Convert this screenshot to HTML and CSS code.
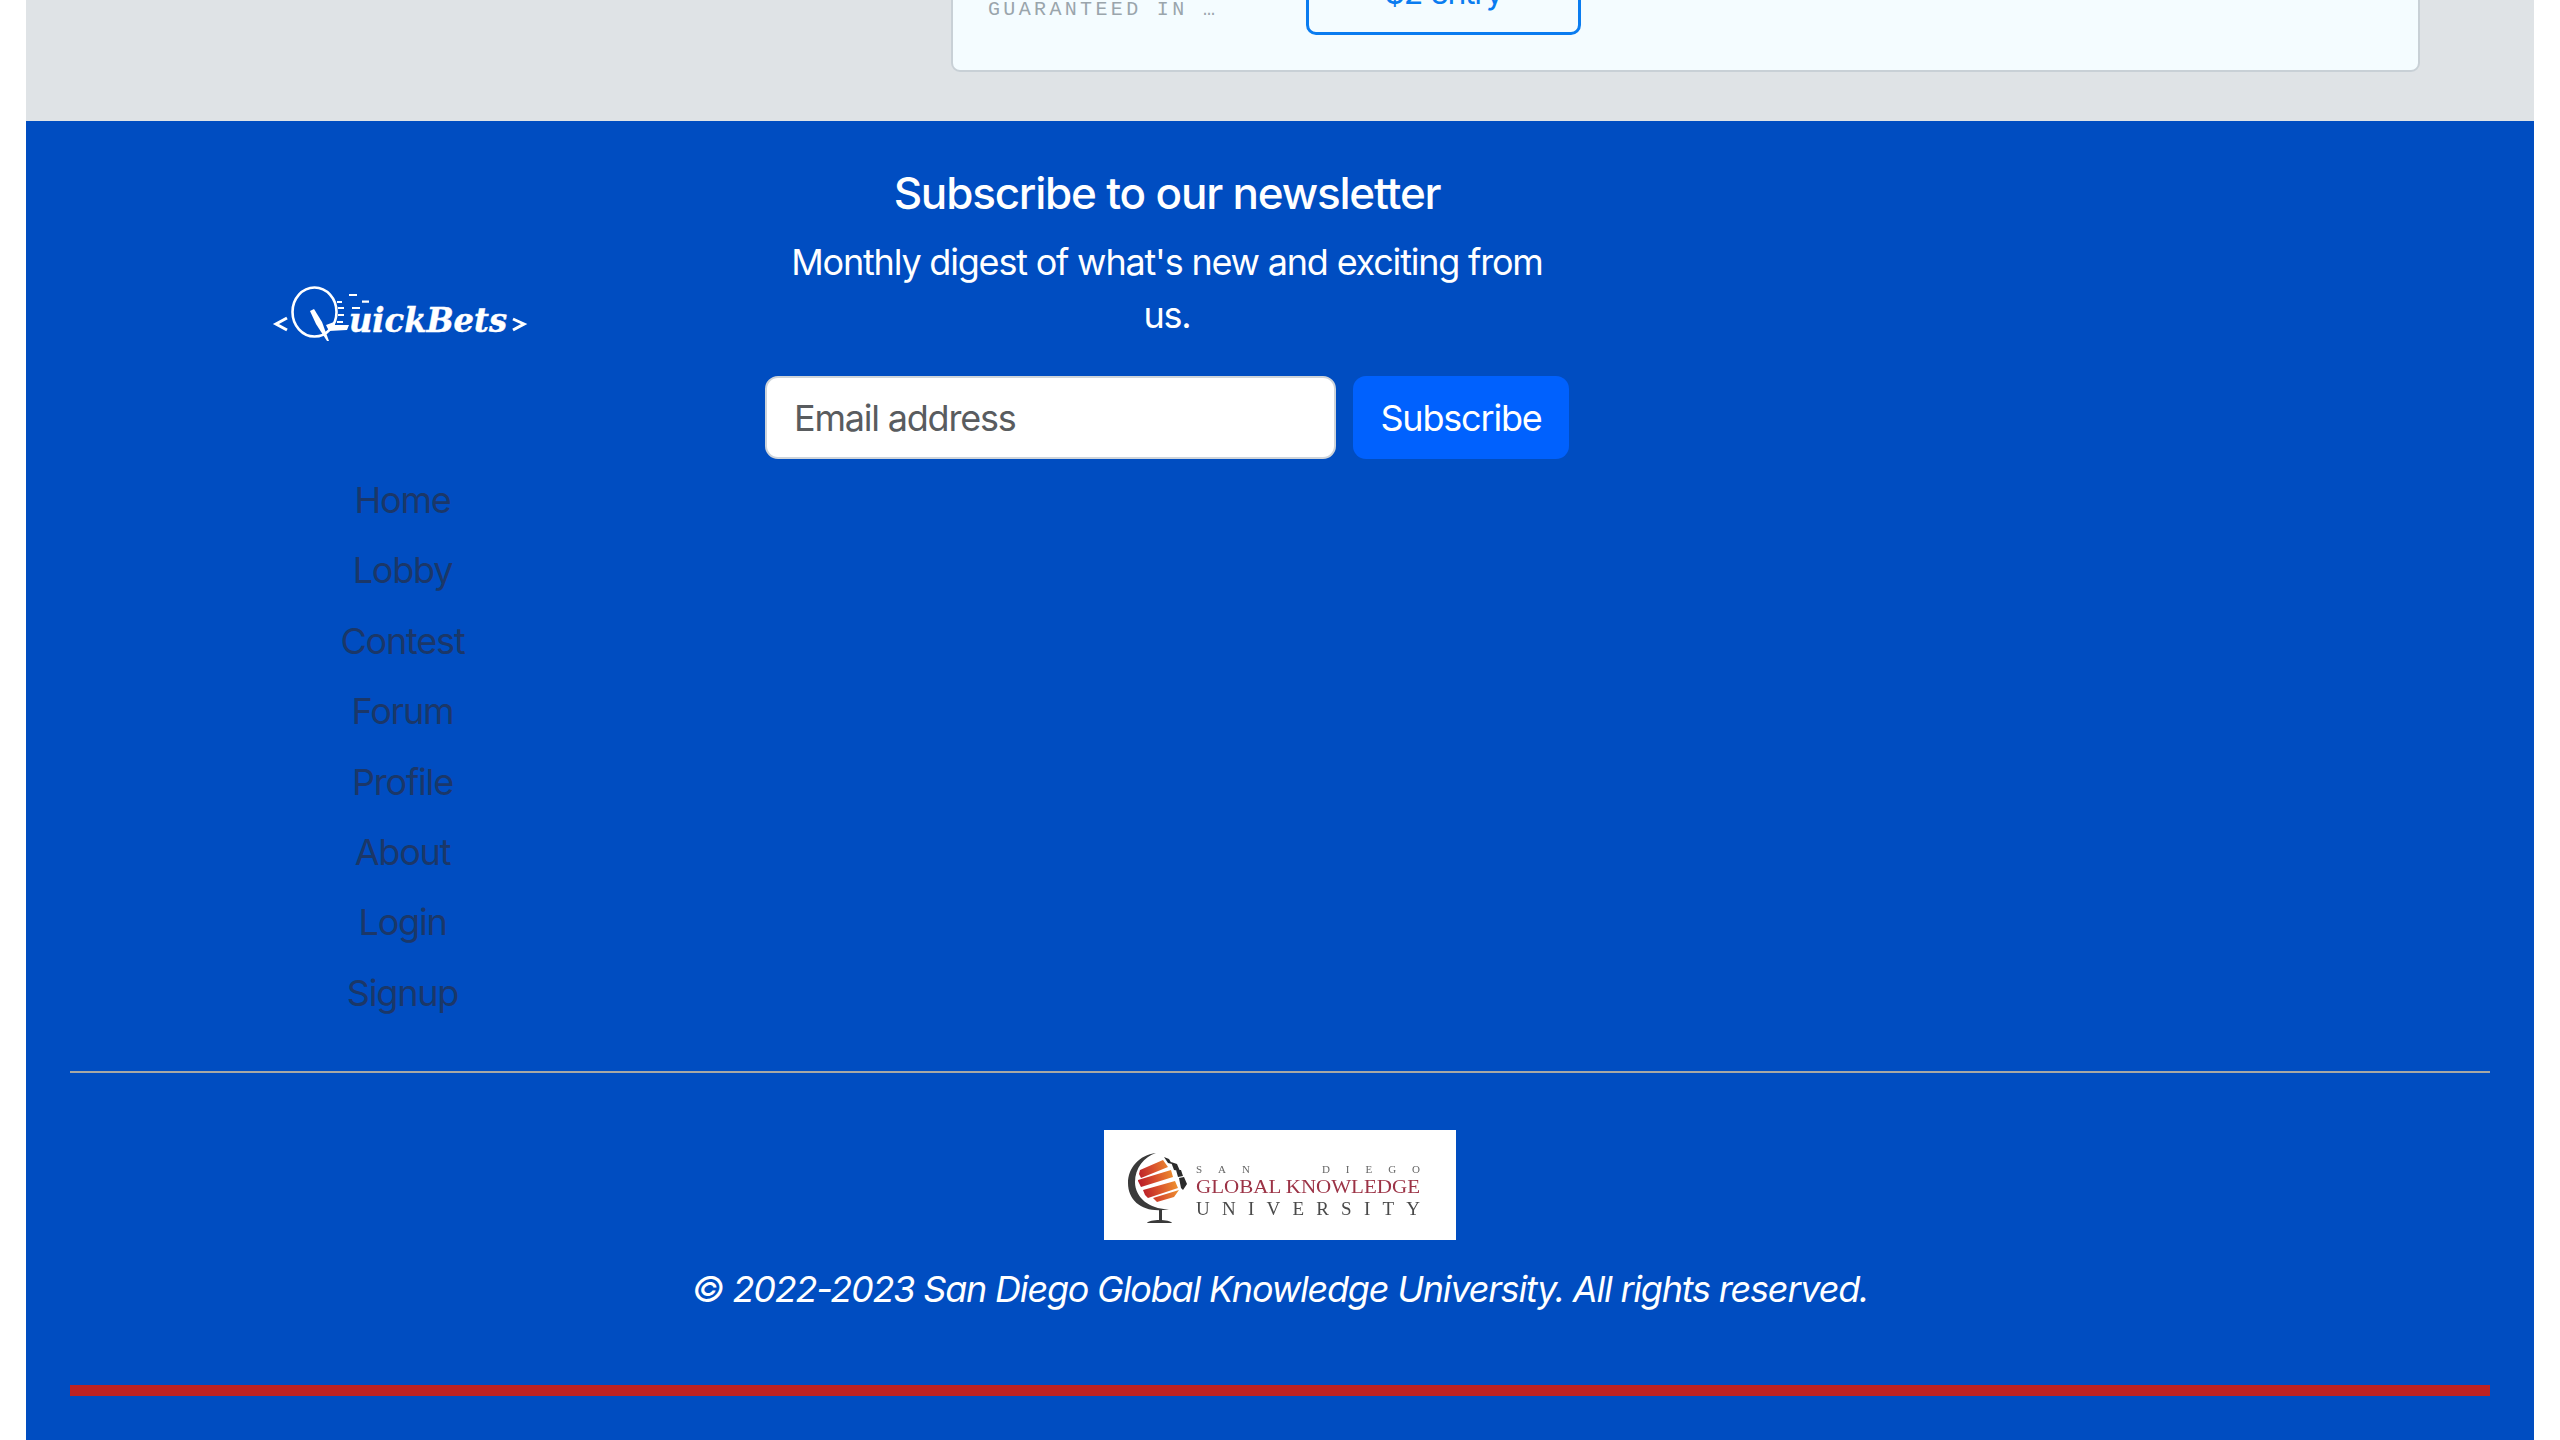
FILE: index.html
```html
<!DOCTYPE html>
<html lang="en">
<head>
<meta charset="utf-8">
<title>QuickBets</title>
<link rel="stylesheet" href="styles.css">
</head>
<body>
<div class="page">
  <section class="hero">
    <div class="card">
      <span class="card-note">GUARANTEED IN …</span>
      <a class="entry" href="#">$2 entry</a>
    </div>
  </section>
  <footer class="footer">
    <div class="columns">
      <div class="nav-col">
        <svg class="brand" viewBox="2 0 300 100" width="300" height="100" role="img" aria-label="QuickBets">
          <g fill="none" stroke="#fff">
            <ellipse cx="64.5" cy="52" rx="22" ry="24.5" stroke-width="2.6"/>
            <path d="M37 58L26 64l11 6M263 59l11 5-11 6" stroke-width="3"/>
            <path d="M99 35h8M112 41.7h7M102 48h8M87 42h5M88 48h6M88 55h6M87 62h6" stroke-width="2.2"/>
          </g>
          <path d="M60 51l4-2 8 13 7 19h-2L66 64z" fill="#fff"/>
          <path d="M76 65l8-3 1 3 14 0-2 5-18 1z" fill="#fff"/>
          <text class="brand-text" x="99" y="72" textLength="158" lengthAdjust="spacingAndGlyphs">uickBets</text>
        </svg>
        <nav class="nav">
          <a href="#">Home</a>
          <a href="#">Lobby</a>
          <a href="#">Contest</a>
          <a href="#">Forum</a>
          <a href="#">Profile</a>
          <a href="#">About</a>
          <a href="#">Login</a>
          <a href="#">Signup</a>
        </nav>
      </div>
      <form class="news">
        <h5 class="news-title">Subscribe to our newsletter</h5>
        <p class="news-text">Monthly digest of what's new and exciting from us.</p>
        <div class="news-row">
          <input class="news-input" type="text" placeholder="Email address">
          <button class="news-btn" type="button">Subscribe</button>
        </div>
      </form>
    </div>
    <hr class="rule">
    <div class="uni">
      <svg class="uni-logo" viewBox="0 0 352 110" width="352" height="110" role="img" aria-label="San Diego Global Knowledge University">
        <defs>
          <linearGradient id="stripe" gradientUnits="userSpaceOnUse" x1="34" x2="72" y1="50" y2="40">
            <stop offset="0" stop-color="#b81c2a"/>
            <stop offset="0.45" stop-color="#d9502c"/>
            <stop offset="1" stop-color="#f0982f"/>
          </linearGradient>
        </defs>
        <rect width="352" height="110" fill="#fff"/>
        <path d="M52 23C35 25 24 38 24 53c0 20 18 31 41 26C48 80 31 69 31 52c0-14 9-25 21-29z" fill="#3a3a3a"/>
        <path d="M36 40L59 30l5 7-27 11-2-4zM34 50l33-10 2 7-32 10-3-6zM39 60l32-9 3 7-30 10-3-3-2-5zM49 68l26-8-5 7-17 5z" fill="url(#stripe)"/>
        <path d="M60 27l5 2 3 5-4-1zM67 32l6 2 3 7-6-1zM72 40l5 0 2 6-5 1zM75 48l5-1 3 7-4 6-2-2z" fill="#2b2b2b"/>
        <path d="M55 79h3v12h-3z" fill="#3a3a3a"/>
        <path d="M43 93c2-4 23-4 25 0z" fill="#3a3a3a"/>
        <text class="uni-small" x="92" y="43" textLength="224">SAN   DIEGO</text>
        <text class="uni-mid" x="92" y="63" textLength="224" lengthAdjust="spacingAndGlyphs">GLOBAL KNOWLEDGE</text>
        <text class="uni-big" x="92" y="85" textLength="224">UNIVERSITY</text>
      </svg>
      <p class="copy">© 2022-2023 San Diego Global Knowledge University. All rights reserved.</p>
    </div>
    <div class="redbar"></div>
  </footer>
</div>
</body>
</html>
```
FILE: styles.css
```css
html, body { margin: 0; padding: 0; background: #fff; }
body { font-family: Inter, "Noto Sans", sans-serif; letter-spacing: -1.2px; }
.page { margin: 0 26px; height: 1440px; overflow: hidden; display: flex; flex-direction: column; }

.hero {
  height: 121px; flex: none; box-sizing: border-box; background: #dfe3e6;
  display: flex; align-items: flex-end; padding: 0 0 49px 925px; overflow: hidden;
}
.card {
  width: 1469px; flex: none; box-sizing: border-box; background: #f4fcff;
  border: 2px solid #c8d0d6; border-radius: 9px;
  padding: 0 0 35px 35px; display: flex; align-items: flex-end;
}
.card-note {
  width: 318px; flex: none; margin-bottom: 13px; color: #9aa5ac;
  font: 20px/24px "Liberation Mono", monospace; letter-spacing: 3.35px;
}
.entry {
  width: 275px; height: 86px; flex: none; box-sizing: border-box;
  border: 3px solid #0a7cf0; border-radius: 10px; color: #0a7cf0;
  font-size: 32px; text-decoration: none;
  display: flex; align-items: center; justify-content: center;
}

.footer { flex: 1; background: #004dc1; padding: 48px 44px 0; }
.columns { display: grid; grid-template-columns: 664px 804px; column-gap: 31px; }
.nav-col { display: flex; flex-direction: column; align-items: center; padding-top: 91px; }
.brand { display: block; }
.brand-text { font: italic bold 34px "DejaVu Serif", serif; fill: #fff; stroke: #fff; stroke-width: 0.5; letter-spacing: 0; }
.nav { margin: 105px 0 0 1px; display: flex; flex-direction: column; align-items: center; }
.nav a {
  height: 70.4px; line-height: 70.4px; font-size: 36px; color: #1b3768; text-decoration: none;
}

.news { color: #fff; text-align: center; }
.news-title { margin: 0 0 19px; font-size: 44px; line-height: 48px; font-weight: 500; }
.news-text { margin: 0 0 34px; font-size: 36px; line-height: 53px; }
.news-row { display: flex; gap: 17px; }
.news-input {
  width: 571px; height: 83px; box-sizing: border-box; padding: 0 27px;
  border: 2px solid #ced4da; border-radius: 13px; background: #fff;
  font: 36px Inter, sans-serif; letter-spacing: -1.2px; color: #212529; outline: none;
}
.news-input::placeholder { color: #595c5f; opacity: 1; }
.news-btn {
  width: 216px; height: 83px; border: 0; border-radius: 13px; background: #0061fe;
  color: #fff; font: 36px Inter, sans-serif; letter-spacing: -1.2px; padding: 0;
}

.rule { margin: 43px 0 0; height: 2px; border: 0; background: #a8a8a4; }
.uni { display: flex; flex-direction: column; align-items: center; margin-top: 57px; }
.uni-logo { display: block; filter: blur(0.5px); }
.uni-small { font: 11px "Liberation Serif", serif; fill: #666; white-space: pre; letter-spacing: 0; }
.uni-mid { font: 19px "Liberation Serif", serif; fill: #9c3346; letter-spacing: 0; }
.uni-big { font: 19px "Liberation Serif", serif; fill: #4a4a4a; letter-spacing: 0; }
.copy { margin: 22px 0 0; color: #fff; font-size: 36px; line-height: 54px; font-style: italic; }
.redbar { margin-top: 69px; height: 11px; background: #bd2222; }
```
